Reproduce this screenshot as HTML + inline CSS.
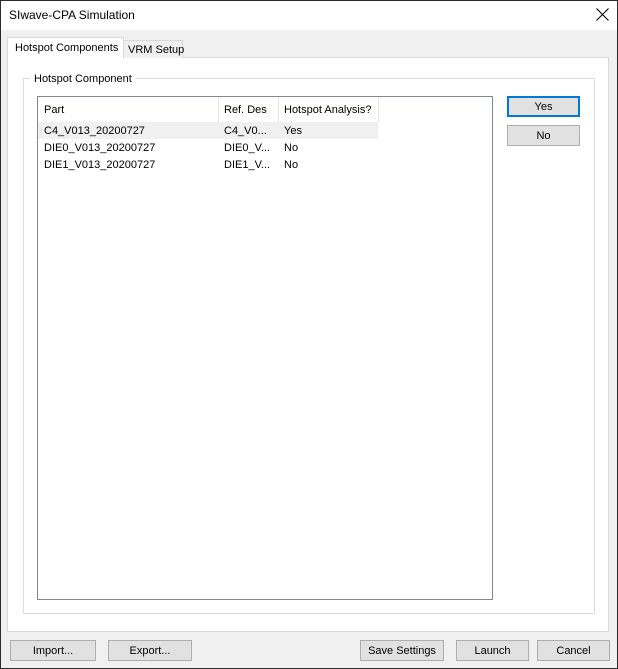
<!DOCTYPE html>
<html><head><style>
*{margin:0;padding:0;box-sizing:border-box}
body{width:618px;height:669px;position:relative;background:#f0f0f0;font-family:"Liberation Sans",sans-serif;font-size:11px;color:#000;overflow:hidden}
.a{position:absolute;white-space:nowrap}
.btn{position:absolute;background:#e1e1e1;border:1px solid #adadad;text-align:center;line-height:20px;font-size:11px;white-space:nowrap}
</style></head><body>
<div class="a" style="left:0;top:0;width:618px;height:669px;border:1px solid #2b2b2b"></div>
<div class="a" style="left:1px;top:1px;width:616px;height:29px;background:#fff"></div>
<div class="a" style="left:9px;top:8px;font-size:12px">SIwave-CPA Simulation</div>
<svg class="a" style="left:596px;top:8px" width="13" height="13"><path d="M0.5 0.5L12.5 12.5M12.5 0.5L0.5 12.5" stroke="#000" stroke-width="1.1"/></svg>
<div class="a" style="left:7px;top:57px;width:602px;height:575px;background:#fff;border:1px solid #d9d9d9"></div>
<div class="a" style="left:123px;top:40px;width:60px;height:18px;background:#f0f0f0;border:1px solid #d9d9d9;border-bottom:none;padding-left:4px;line-height:18px">VRM Setup</div>
<div class="a" style="left:7px;top:37px;width:117px;height:21px;background:#fff;border:1px solid #d9d9d9;border-bottom:none;padding-left:7px;line-height:20px">Hotspot Components</div>
<div class="a" style="left:23px;top:78px;width:572px;height:536px;border:1px solid #dcdcdc"></div>
<div class="a" style="left:30px;top:72px;background:#fff;padding:0 4px;line-height:15px">Hotspot Component</div>
<div class="a" style="left:37px;top:96px;width:456px;height:504px;border:1px solid #828790;background:#fff"></div>
<div class="a" style="left:218px;top:97px;width:1px;height:25px;background:#e5e5e5"></div>
<div class="a" style="left:278px;top:97px;width:1px;height:25px;background:#e5e5e5"></div>
<div class="a" style="left:378px;top:97px;width:1px;height:25px;background:#e5e5e5"></div>
<div class="a" style="left:44px;top:104px">Part</div>
<div class="a" style="left:224px;top:104px">Ref. Des</div>
<div class="a" style="left:284px;top:104px">Hotspot Analysis?</div>
<div class="a" style="left:38px;top:122px;width:340px;height:17px;background:#f0f0f0"></div>
<div class="a" style="left:44px;top:125px">C4_V013_20200727</div>
<div class="a" style="left:224px;top:125px">C4_V0...</div>
<div class="a" style="left:284px;top:125px">Yes</div>
<div class="a" style="left:44px;top:142px">DIE0_V013_20200727</div>
<div class="a" style="left:224px;top:142px">DIE0_V...</div>
<div class="a" style="left:284px;top:142px">No</div>
<div class="a" style="left:44px;top:159px">DIE1_V013_20200727</div>
<div class="a" style="left:224px;top:159px">DIE1_V...</div>
<div class="a" style="left:284px;top:159px">No</div>
<div class="btn" style="left:507px;top:96px;width:73px;height:21px;border:2px solid #0078d7;line-height:18px">Yes</div>
<div class="btn" style="left:507px;top:125px;width:73px;height:21px">No</div>
<div class="btn" style="left:10px;top:640px;width:86px;height:21px">Import...</div>
<div class="btn" style="left:108px;top:640px;width:84px;height:21px">Export...</div>
<div class="btn" style="left:360px;top:640px;width:84px;height:21px">Save Settings</div>
<div class="btn" style="left:456px;top:640px;width:73px;height:21px">Launch</div>
<div class="btn" style="left:537px;top:640px;width:73px;height:21px">Cancel</div>
</body></html>
